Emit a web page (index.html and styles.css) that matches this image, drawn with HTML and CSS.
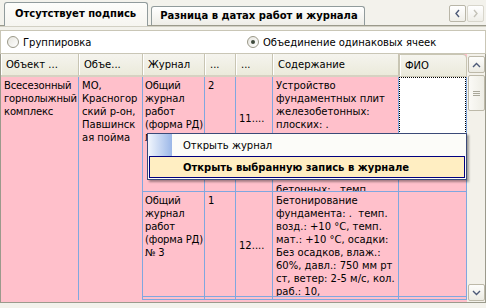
FILE: index.html
```html
<!DOCTYPE html>
<html lang="ru">
<head>
    <meta charset="UTF-8">
    <title>Журнал работ - проверка</title>
    <link rel="stylesheet" href="styles.css">
</head>
<body>
    <div class="window">
        <div class="tabbar">
            <div class="tab active">Отсутствует подпись</div>
            <div class="tab">Разница в датах работ и журнала</div>
            <div class="tab-scroll">
                <span class="arrow-btn">
                    <svg width="7" height="9" viewBox="0 0 7 9"><path d="M5 1 L2 4.5 L5 8" fill="none" stroke="#4d5a78" stroke-width="1.4"/></svg>
                </span>
                <span class="arrow-btn disabled">
                    <svg width="7" height="9" viewBox="0 0 7 9"><path d="M2 1 L5 4.5 L2 8" fill="none" stroke="#c4c2b8" stroke-width="1.4"/></svg>
                </span>
            </div>
        </div>

        <div class="page">
            <div class="options">
                <label class="radio"><span class="radio-dot"></span>Группировка</label>
                <label class="radio checked"><span class="radio-dot"></span>Объединение одинаковых ячеек</label>
            </div>

            <div class="grid-box">
                <div class="grid">
                    <div class="hd">Объект ...</div>
                    <div class="hd">Объе...</div>
                    <div class="hd">Журнал</div>
                    <div class="hd">...</div>
                    <div class="hd">...</div>
                    <div class="hd">Содержание</div>
                    <div class="hd hd-last">ФИО</div>

                    <!-- merged cells span both journal rows -->
                    <div class="cell merged tight">Всесезонный горнолыжный комплекс</div>
                    <div class="cell merged">МО, Красногорский р-он, Павшинская пойма</div>

                    <div class="cell tight">Общий журнал работ (форма РД) № 2</div>
                    <div class="cell">2</div>
                    <div class="cell mid lifted">11....</div>
                    <div class="cell">Устройство фундаментных плит железобетонных: плоских: .<br>Устройство фундаментных плит<br>монолитных<br>железобетонных:<br>бетонных: . темп.</div>
                    <div class="cell fio"><div class="focus"></div></div>

                    <div class="cell tight">Общий журнал работ (форма РД) № 3</div>
                    <div class="cell">1</div>
                    <div class="cell mid">12....</div>
                    <div class="cell">Бетонирование фундамента: . &nbsp;темп. возд.: +10 °C, темп. мат.: +10 °C, осадки: Без осадков, влаж.: 60%, давл.: 750 мм рт ст, ветер: 2-5 м/с, кол. раб.: 10,</div>
                    <div class="cell"></div>

                    <div class="cell filler"></div>
                    <div class="cell filler"></div>
                    <div class="cell filler"></div>
                    <div class="cell filler"></div>
                    <div class="cell filler"></div>
                </div>

                <div class="vscroll">
                    <span class="sb-btn">
                        <svg width="9" height="6" viewBox="0 0 9 6"><path d="M1 5 L4.5 1.5 L8 5" fill="none" stroke="#4d5a78" stroke-width="1.4"/></svg>
                    </span>
                    <span class="sb-thumb"><span class="grip"></span></span>
                    <span class="sb-track"></span>
                    <span class="sb-btn">
                        <svg width="9" height="6" viewBox="0 0 9 6"><path d="M1 1 L4.5 4.5 L8 1" fill="none" stroke="#4d5a78" stroke-width="1.4"/></svg>
                    </span>
                </div>
            </div>
        </div>

        <div class="menu">
            <div class="menu-item"><span class="menu-icon"></span><span class="menu-text">Открыть журнал</span></div>
            <div class="menu-item hot"><span class="menu-icon"></span><span class="menu-text">Открыть выбранную запись в журнале</span></div>
        </div>
    </div>
</body>
</html>
```

FILE: styles.css
```css
body {
    margin: 0;
    background: #ece9d8;
    font-family: "DejaVu Sans", Verdana, sans-serif;
    font-size: 10px;
    color: #000;
}
.window {
    width: 486px;
    height: 308px;
    position: relative;
    overflow: hidden;
    background: #f3f2ec;
}

/* tabs */
.tabbar {
    height: 25px;
    display: flex;
    align-items: flex-end;
    padding-left: 3px;
    padding-right: 2px;
}
.tab {
    height: 18px;
    line-height: 18px;
    padding: 0 6px 0 8px;
    margin-left: 3px;
    border: 1px solid #919b9c;
    border-bottom: none;
    border-radius: 3px 3px 0 0;
    background: linear-gradient(#ffffff, #eeede7);
    font-weight: bold;
    white-space: nowrap;
}
.tab.active {
    height: 23px;
    line-height: 22px;
    padding: 0 11px 0 10px;
    margin-left: 1px;
    margin-bottom: -1px;
    background: linear-gradient(#fdfdfb, #f6f5f0);
    position: relative;
    z-index: 1;
}
.tab-scroll {
    margin-left: auto;
    align-self: flex-start;
    margin-top: 5px;
    display: flex;
    gap: 1px;
}
.arrow-btn {
    width: 15px;
    height: 15px;
    border: 1px solid #b9b6a8;
    border-radius: 2px;
    background: linear-gradient(#ffffff, #efeee8);
    display: flex;
    align-items: center;
    justify-content: center;
}
.arrow-btn.disabled {
    border-color: #d8d6cc;
}

/* page */
.page {
    border-top: 1px solid #9b9a8c;
    box-shadow: inset 0 1px 0 #d2d0c4;
    padding-top: 4px;
}
.options {
    height: 22px;
    border: 1px solid #c9c6b6;
    background: #fff;
    display: grid;
    grid-template-columns: 240px auto;
    align-items: center;
    padding-left: 6px;
}
.radio {
    display: flex;
    align-items: center;
    gap: 4px;
}
.radio-dot {
    width: 10px;
    height: 10px;
    border: 1px solid #9a9888;
    border-radius: 50%;
    background: linear-gradient(135deg, #e6e5de, #ffffff);
    display: flex;
    align-items: center;
    justify-content: center;
}
.radio.checked .radio-dot::after {
    content: "";
    width: 4px;
    height: 4px;
    border-radius: 50%;
    background: #3e4a3c;
}

/* grid */
.grid-box {
    display: flex;
    border: 1px solid #9b9a8c;
    border-top: none;
    background: #f4f3ee;
}
.grid {
    display: grid;
    grid-template-columns: 78px 64px 62px 31px 37px 126px 68px;
    grid-template-rows: 23px 115px 105px 3px;
    height: 248px;
    background: #ffc0cb;
}
.hd {
    box-sizing: border-box;
    background: linear-gradient(#f5f4ee, #ebeadb);
    border-right: 1px solid #c8c5b3;
    border-bottom: 2px solid #d6d2c2;
    box-shadow: inset 1px 0 0 #fff;
    padding-left: 5px;
    line-height: 21px;
    white-space: nowrap;
    overflow: hidden;
}
.hd-last {
    border: 1px solid #c8c5b3;
    border-radius: 0 4px 0 0;
}
.cell {
    box-sizing: border-box;
    background: #ffc0cb;
    border-right: 1px solid #7fa7df;
    border-bottom: 1px solid #7fa7df;
    padding: 2px 1px 0 3px;
    line-height: 13px;
    overflow: hidden;
    overflow-wrap: break-word;
}
.tight {
    letter-spacing: -0.15px;
    padding: 2px 0 0 2px;
}
.merged {
    grid-row: span 3;
    border-bottom: none;
}
.merged.tight {
    padding-left: 3px;
}
.mid {
    display: flex;
    align-items: center;
}
.lifted {
    padding-bottom: 34px;
}
.filler {
    padding: 0;
}
.fio {
    padding: 0;
}
.focus {
    height: 103px;
    background: #fff;
    border: 1px dotted #000;
    box-sizing: border-box;
}

/* vertical scrollbar */
.vscroll {
    width: 18px;
    display: flex;
    flex-direction: column;
    padding: 2px 0 1px 1px;
    box-sizing: border-box;
    background: #f3f1ea;
}
.sb-btn {
    width: 15px;
    height: 15px;
    border: 1px solid #bdb9a9;
    border-radius: 2px;
    background: linear-gradient(#fdfdfb, #ecebe3);
    display: flex;
    align-items: center;
    justify-content: center;
}
.sb-thumb {
    margin-top: 2px;
    height: 34px;
    width: 15px;
    border: 1px solid #bdb9a9;
    border-radius: 2px;
    background: linear-gradient(90deg, #fbfaf6, #eeede5);
    display: flex;
    align-items: center;
    justify-content: center;
}
.grip {
    width: 7px;
    height: 5px;
    border-top: 1px solid #a9a799;
    border-bottom: 1px solid #a9a799;
    box-sizing: border-box;
    position: relative;
}
.grip::after {
    content: "";
    position: absolute;
    left: 0;
    right: 0;
    top: 1px;
    border-top: 1px solid #a9a799;
}
.sb-track {
    flex: 1;
}

/* context menu */
.menu {
    position: absolute;
    left: 147px;
    top: 133px;
    width: 318px;
    border: 1px solid #3b4a78;
    background: #fcfcf9;
    box-shadow: 2px 2px 2px rgba(0, 0, 0, 0.35);
}
.menu-item {
    height: 22px;
    display: flex;
    align-items: center;
    box-sizing: border-box;
}
.menu-icon {
    width: 24px;
    align-self: stretch;
    background: linear-gradient(90deg, #f2f6fd, #9bb7e8);
}
.menu-text {
    padding-left: 11px;
}
.menu-item.hot {
    margin: 0 1px 1px 1px;
    border: 1px solid #000080;
    background: #ffeec2;
    font-weight: bold;
}
.menu-item.hot .menu-icon {
    background: none;
    width: 22px;
}
```
